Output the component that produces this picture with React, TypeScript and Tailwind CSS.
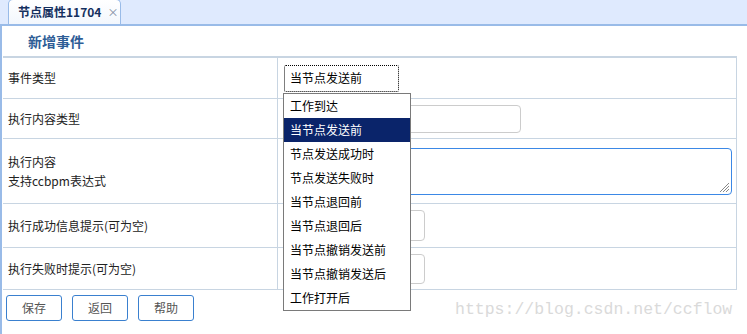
import React from 'react';

const options = [
  '工作到达',
  '当节点发送前',
  '节点发送成功时',
  '节点发送失败时',
  '当节点退回前',
  '当节点退回后',
  '当节点撤销发送前',
  '当节点撤销发送后',
  '工作打开后',
];

const font = { fontFamily: '"Microsoft YaHei", "Noto Sans CJK SC", sans-serif' };

export default function App() {
  const selected = '当节点发送前';

  return (
    <div
      className="relative h-[334px] w-[747px] overflow-hidden bg-white text-[12px] text-[#222]"
      style={font}
    >
      {/* Tab strip */}
      <div className="flex h-[26px] items-end border-b-2 border-[#99bbe8] bg-[#dfeafe] pl-[8px]">
        <div className="flex h-[25px] w-[113px] items-center rounded-t-[5px] border border-b-0 border-[#99bbe8] bg-gradient-to-b from-white to-[#f3f7fd] pl-[9px]">
          <span className="text-[12px] font-bold text-[#15305e]">节点属性11704</span>
          <span className="ml-[6px] text-[11px] text-[#7d8aa0]">×</span>
        </div>
      </div>

      {/* Body */}
      <div className="flex h-[308px]">
        <div className="w-[2px] bg-[#99bbe8]" />
        <div className="ml-[1px] flex w-[734px] flex-col">
          <div className="flex h-[30px] items-center pl-[25px] text-[14px] font-bold text-[#2e5d96]">
            新增事件
          </div>

          <div className="border-r border-t-2 border-[#c8d5e2]">
            <div className="grid h-[41px] grid-cols-[275px_1fr] border-b border-[#c8d5e2]">
              <div className="flex items-center border-r border-[#c8d5e2] pl-[5px]">事件类型</div>
              <div className="flex items-center pl-[6px]">
                <div className="flex h-[27px] w-[115px] items-center rounded-[2px] border border-dotted border-black pl-[5px] text-[12px] text-black">
                  {selected}
                </div>
              </div>
            </div>

            <div className="grid h-[40px] grid-cols-[275px_1fr] border-b border-[#c8d5e2]">
              <div className="flex items-center border-r border-[#c8d5e2] pl-[5px]">执行内容类型</div>
              <div className="flex items-center pl-[6px]">
                <div className="h-[28px] w-[237px] rounded-[4px] border border-[#cccccc]" />
              </div>
            </div>

            <div className="grid h-[65px] grid-cols-[275px_1fr] border-b border-[#c8d5e2]">
              <div className="flex flex-col justify-center border-r border-[#c8d5e2] pl-[5px] leading-[19px]">
                <span>执行内容</span>
                <span>支持ccbpm表达式</span>
              </div>
              <div className="flex items-center pl-[6px]">
                <div className="relative h-[47px] w-[448px] rounded-[4px] border border-[#3b88e6]">
                  <svg className="absolute bottom-[1px] right-[1px]" width="12" height="12" viewBox="0 0 12 12">
                    <path d="M11 2 L2 11 M11 5 L5 11 M11 8 L8 11" stroke="#888" strokeWidth="1" />
                  </svg>
                </div>
              </div>
            </div>

            <div className="grid h-[44px] grid-cols-[275px_1fr] border-b border-[#c8d5e2]">
              <div className="flex items-center border-r border-[#c8d5e2] pl-[5px]">执行成功信息提示(可为空)</div>
              <div className="flex items-center pl-[6px]">
                <div className="h-[31px] w-[141px] rounded-[4px] border border-[#cccccc]" />
              </div>
            </div>

            <div className="grid h-[42px] grid-cols-[275px_1fr] border-b border-[#c8d5e2]">
              <div className="flex items-center border-r border-[#c8d5e2] pl-[5px]">执行失败时提示(可为空)</div>
              <div className="flex items-center pl-[6px]">
                <div className="h-[30px] w-[141px] rounded-[4px] border border-[#cccccc]" />
              </div>
            </div>
          </div>

          <div className="mt-[5px] flex gap-[10px] pl-[3px]">
            {['保存', '返回', '帮助'].map(label => (
              <button
                key={label}
                type="button"
                className="flex h-[26px] w-[56px] items-center justify-center rounded-[3px] border border-[#3a80cf] bg-white text-[12px] text-[#555]"
              >
                {label}
              </button>
            ))}
          </div>
        </div>
      </div>

      {/* Open select list */}
      <div className="absolute left-[283px] top-[93px] w-[128px] border border-[#7a7a7a] bg-white">
        {options.map(opt => (
          <div
            key={opt}
            className={
              opt === selected
                ? 'flex h-[24px] items-center bg-[#0a246a] pl-[6px] text-white'
                : 'flex h-[24px] items-center pl-[6px] text-black'
            }
          >
            {opt}
          </div>
        ))}
      </div>

      {/* Watermark */}
      <div
        className="absolute left-[455px] top-[298px] text-[16.5px] text-[#dadada]"
        style={{ fontFamily: '"Liberation Mono", monospace' }}
      >
        https://blog.csdn.net/ccflow
      </div>
    </div>
  );
}
